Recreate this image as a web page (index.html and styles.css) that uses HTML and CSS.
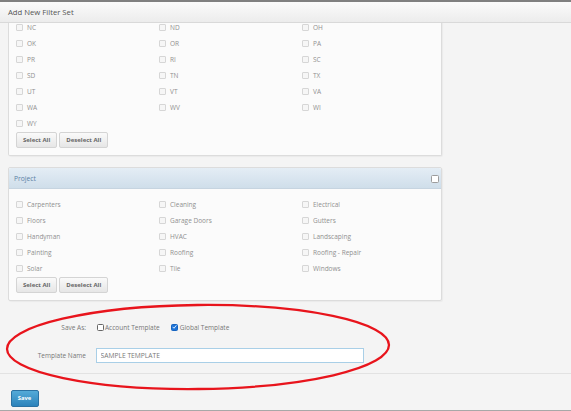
FILE: index.html
```html
<!DOCTYPE html>
<html lang="en">
<head>
<meta charset="utf-8">
<title>Add New Filter Set</title>
<link rel="stylesheet" href="styles.css">
</head>
<body>
<div class="modal">
  <div class="modal-header">
    <h1 class="modal-title">Add New Filter Set</h1>
  </div>

  <div class="modal-body">
    <div class="content">
      <!-- State list (scrolled part of the location panel) -->
      <section class="panel panel-scrolled">
        <div class="panel-body">
          <div class="check-grid">
            <label class="check"><span class="box"></span>NC</label>
            <label class="check"><span class="box"></span>ND</label>
            <label class="check"><span class="box"></span>OH</label>
            <label class="check"><span class="box"></span>OK</label>
            <label class="check"><span class="box"></span>OR</label>
            <label class="check"><span class="box"></span>PA</label>
            <label class="check"><span class="box"></span>PR</label>
            <label class="check"><span class="box"></span>RI</label>
            <label class="check"><span class="box"></span>SC</label>
            <label class="check"><span class="box"></span>SD</label>
            <label class="check"><span class="box"></span>TN</label>
            <label class="check"><span class="box"></span>TX</label>
            <label class="check"><span class="box"></span>UT</label>
            <label class="check"><span class="box"></span>VT</label>
            <label class="check"><span class="box"></span>VA</label>
            <label class="check"><span class="box"></span>WA</label>
            <label class="check"><span class="box"></span>WV</label>
            <label class="check"><span class="box"></span>WI</label>
            <label class="check"><span class="box"></span>WY</label>
          </div>
          <div class="btn-group">
            <button class="btn">Select All</button>
            <button class="btn">Deselect All</button>
          </div>
        </div>
      </section>

      <!-- Project types -->
      <section class="panel panel-project">
        <div class="panel-heading">
          <span class="panel-title">Project</span>
          <span class="box box-head"></span>
        </div>
        <div class="panel-body">
          <div class="check-grid">
            <label class="check"><span class="box"></span>Carpenters</label>
            <label class="check"><span class="box"></span>Cleaning</label>
            <label class="check"><span class="box"></span>Electrical</label>
            <label class="check"><span class="box"></span>Floors</label>
            <label class="check"><span class="box"></span>Garage Doors</label>
            <label class="check"><span class="box"></span>Gutters</label>
            <label class="check"><span class="box"></span>Handyman</label>
            <label class="check"><span class="box"></span>HVAC</label>
            <label class="check"><span class="box"></span>Landscaping</label>
            <label class="check"><span class="box"></span>Painting</label>
            <label class="check"><span class="box"></span>Roofing</label>
            <label class="check"><span class="box"></span>Roofing - Repair</label>
            <label class="check"><span class="box"></span>Solar</label>
            <label class="check"><span class="box"></span>Tile</label>
            <label class="check"><span class="box"></span>Windows</label>
          </div>
          <div class="btn-group">
            <button class="btn">Select All</button>
            <button class="btn">Deselect All</button>
          </div>
        </div>
      </section>

      <!-- Template options -->
      <div class="form">
        <div class="form-row">
          <span class="form-label">Save As:</span>
          <div class="form-controls">
            <label class="option"><span class="box box-dark"></span>Account Template</label>
            <label class="option option-global"><span class="box box-checked"><svg viewBox="0 0 8 8" width="7" height="7"><path d="M1.4 4.2 L3.2 6 L6.6 1.8" fill="none" stroke="#fff" stroke-width="1.4" stroke-linecap="round" stroke-linejoin="round"/></svg></span>Global Template</label>
          </div>
        </div>
        <div class="form-row form-row-name">
          <label class="form-label" for="template-name">Template Name</label>
          <input class="text-input" id="template-name" type="text" value="SAMPLE TEMPLATE">
        </div>
      </div>
    </div>
  </div>

  <div class="modal-footer">
    <button class="btn btn-primary">Save</button>
  </div>
</div>

<svg class="annotation" width="571" height="411" viewBox="0 0 571 411">
  <ellipse cx="198" cy="347" rx="191" ry="42" transform="rotate(-0.6 198 347)" fill="none" stroke="#e8141c" stroke-width="2.3"/>
</svg>
</body>
</html>
```

FILE: styles.css
```css
* {
  box-sizing: border-box;
}

html,
body {
  margin: 0;
  padding: 0;
}

body {
  position: relative;
  width: 571px;
  height: 411px;
  overflow: hidden;
  background: #f4f4f4;
  font-family: "Open Sans", "Liberation Sans", sans-serif;
  color: #777;
}

/* Modal frame */
.modal {
  display: flex;
  flex-direction: column;
  height: 411px;
  border-top: 2px solid #808080;
}

.modal-header {
  display: flex;
  align-items: center;
  flex: none;
  height: 21px;
  padding-left: 8px;
  background: linear-gradient(#fbfbfb, #ececec);
  border-bottom: 1px solid #d9d9d9;
}

.modal-title {
  margin: 0;
  font-size: 7.7px;
  font-weight: 400;
  color: #555;
}

.modal-body {
  flex: none;
  height: 350px;
  overflow: hidden;
  padding: 0 8px;
}

.content {
  width: 434px;
}

.modal-footer {
  flex: none;
  height: 38px;
  padding: 9px 0 0 10.5px;
  border-top: 1px solid #e2e2e2;
  border-bottom: 1px solid #a8a8a8;
}

/* Panels */
.panel {
  background: #fbfbfb;
  border: 1px solid #dcdcdc;
  border-radius: 2px;
  box-shadow: 1px 1px 1px rgba(0, 0, 0, 0.04);
}

.panel-scrolled {
  margin-top: -4px;
  border-top: none;
  border-radius: 0 0 2px 2px;
}

.panel-project {
  margin-top: 11px;
}

.panel-heading {
  display: flex;
  align-items: center;
  justify-content: space-between;
  height: 21px;
  padding: 0 2.5px 0 5px;
  background: linear-gradient(#e4edf5, #cfdeea);
  border-bottom: 1px solid #c6d4e0;
  border-radius: 2px 2px 0 0;
}

.panel-title {
  font-size: 6.7px;
  color: #5a7fa4;
}

.panel-body {
  padding: 7px 7px 7px 7px;
}

.panel-scrolled .panel-body {
  padding-top: 0;
}

.check-grid {
  display: grid;
  grid-template-columns: repeat(3, 143px);
}

.check {
  display: flex;
  align-items: center;
  height: 16px;
  font-size: 6.5px;
  color: #909090;
  white-space: nowrap;
}

/* Checkbox squares */
.box {
  flex: none;
  display: inline-flex;
  align-items: center;
  justify-content: center;
  width: 7px;
  height: 7px;
  margin-right: 4px;
  background: #f6f6f6;
  border: 1px solid #d6d6d6;
  border-radius: 1px;
}

.box-head {
  width: 8px;
  height: 8px;
  margin: 1px 0 0 0;
  background: #fff;
  border: 1.5px solid #9c9c9c;
  border-radius: 1.5px;
}

.box-dark {
  margin-right: 1.5px;
  background: #fff;
  border-color: #666;
  border-radius: 1.5px;
}

.box-checked {
  margin-right: 2px;
  background: #1d74d8;
  border-color: #1664c0;
  border-radius: 1.5px;
}

.box-checked svg {
  display: block;
  width: 6px;
  height: 6px;
}

/* Buttons */
.btn-group {
  display: flex;
  gap: 2px;
  margin-top: 1px;
}

.btn {
  height: 16px;
  padding: 0 6px;
  font-family: inherit;
  font-size: 6px;
  font-weight: 700;
  color: #666;
  background: linear-gradient(#fafafa, #e6e6e6);
  border: 1px solid #d4d4d4;
  border-radius: 2px;
  cursor: pointer;
}

.btn-primary {
  width: 28px;
  height: 17px;
  padding: 0;
  font-size: 5.8px;
  color: #fff;
  background: linear-gradient(#54aad8, #2c83bb);
  border-color: #2b72a3;
}

/* Template form */
.form {
  padding-top: 18px;
}

.form-row {
  display: flex;
  align-items: center;
  height: 16px;
}

.form-row-name {
  height: 15px;
  margin-top: 13px;
}

.form-label {
  flex: none;
  width: 78px;
  margin-right: 10px;
  font-size: 6.5px;
  color: #777;
  text-align: right;
}

.form-controls {
  display: flex;
  align-items: center;
  padding-left: 0.5px;
}

.option {
  display: flex;
  align-items: center;
  font-size: 6.5px;
  color: #777;
}

.option-global {
  margin-left: 11px;
}

.text-input {
  width: 268px;
  height: 15px;
  padding: 0 3.5px;
  font-family: inherit;
  font-size: 6.7px;
  color: #777;
  background: #fff;
  border: 1px solid #a9cfe7;
  border-radius: 0;
  outline: none;
}

/* Red hand-drawn highlight over the template options */
.annotation {
  position: absolute;
  top: 0;
  left: 0;
  pointer-events: none;
}
```
